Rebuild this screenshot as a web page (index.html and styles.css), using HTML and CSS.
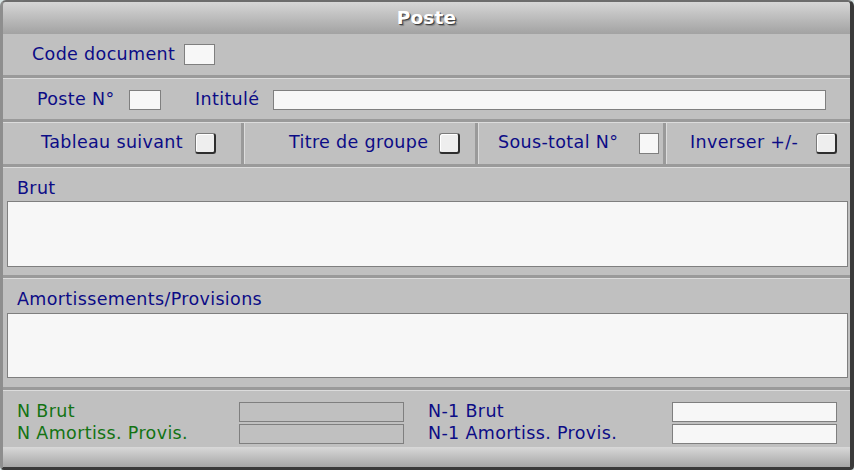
FILE: index.html
```html
<!DOCTYPE html>
<html lang="fr">
<head>
<meta charset="utf-8">
<title>Poste</title>
<link rel="stylesheet" href="styles.css">
</head>
<body>
<div class="window">
  <div class="titlebar"><span class="title">Poste</span></div>

  <div class="row row-code">
    <span class="lbl lbl-code">Code document</span>
    <span class="field f-code"></span>
  </div>
  <div class="sep"></div>

  <div class="row row-poste">
    <span class="lbl lbl-poste">Poste N°</span>
    <span class="field f-poste"></span>
    <span class="lbl lbl-intitule">Intitulé</span>
    <span class="field f-intitule"></span>
  </div>
  <div class="sep"></div>

  <div class="row row-flags">
    <div class="cell c1"><span class="lbl">Tableau suivant</span><span class="check"></span></div>
    <div class="vsep"></div>
    <div class="cell c2"><span class="lbl">Titre de groupe</span><span class="check"></span></div>
    <div class="vsep"></div>
    <div class="cell c3"><span class="lbl">Sous-total N°</span><span class="field f-sub"></span></div>
    <div class="vsep"></div>
    <div class="cell c4"><span class="lbl">Inverser +/-</span><span class="check"></span></div>
  </div>
  <div class="sep"></div>

  <div class="block block-brut">
    <div class="lbl">Brut</div>
    <div class="area area-brut"></div>
  </div>
  <div class="sep"></div>

  <div class="block block-amort">
    <div class="lbl">Amortissements/Provisions</div>
    <div class="area area-amort"></div>
  </div>
  <div class="sep"></div>

  <div class="totals">
    <span class="lbl green">N Brut</span>
    <span class="field f-total ro"></span>
    <span class="lbl">N-1 Brut</span>
    <span class="field f-total"></span>
    <span class="lbl green">N Amortiss. Provis.</span>
    <span class="field f-total ro"></span>
    <span class="lbl">N-1 Amortiss. Provis.</span>
    <span class="field f-total"></span>
  </div>

  <div class="footer"></div>
</div>
</body>
</html>
```

FILE: styles.css
```css
* { box-sizing: border-box; }

html, body {
  margin: 0;
  padding: 0;
  background: #d8e4e4;
}

.window {
  width: 854px;
  height: 470px;
  display: flex;
  flex-direction: column;
  background: #c0c0c0;
  border-top: 2px solid #6c6c6c;
  border-left: 3px solid #8e8e8e;
  border-right: 4px solid #3a3a3a;
  border-bottom: 3px solid #3a3a3a;
  border-radius: 6px 6px 4px 4px;
  overflow: hidden;
  font-family: "DejaVu Sans", Verdana, sans-serif;
  font-size: 17.5px;
  letter-spacing: 0.35px;
  color: #0c0c86;
}

.titlebar {
  height: 32px;
  flex: none;
  display: flex;
  align-items: center;
  justify-content: center;
  padding-bottom: 2px;
  background: linear-gradient(#d6d6d6, #a2a2a2);
}

.title {
  font-weight: bold;
  font-size: 18.5px;
  color: #ffffff;
  text-shadow: 1px 1px 0 #404040, 2px 2px 1px rgba(0,0,0,0.25);
  letter-spacing: 0.2px;
}

.lbl {
  white-space: nowrap;
  line-height: 20px;
}

.green { color: #137313; }

.row {
  display: flex;
  align-items: center;
  flex: none;
}

.row-code { height: 41px; padding-left: 29px; }
.lbl-code { width: 152px; margin-top: -2px; }
.f-code { width: 31px; height: 21px; }

.row-poste { height: 40px; padding-left: 34px; padding-top: 1px; }
.lbl-poste { width: 92px; margin-top: -1px; }
.f-poste { width: 32px; height: 20px; }
.lbl-intitule { width: 78px; margin-left: 34px; margin-top: -1px; }
.f-intitule { width: 553px; height: 20px; }

.field {
  display: block;
  background: #f7f7f7;
  border: 1px solid #7f7f7f;
  flex: none;
}
.field.ro { background: #c0c0c0; }

.sep {
  height: 4px;
  flex: none;
  background: #9a9a9a;
  border-bottom: 1px solid #dcdcdc;
  margin-right: -1px;
}

.row-flags { height: 41px; align-items: stretch; }

.cell {
  display: flex;
  align-items: center;
}
.cell .lbl { margin-top: -3px; }
.c1 { width: 238px; padding-left: 38px; padding-right: 25px; }
.c2 { width: 230px; padding-left: 44px; padding-right: 15px; }
.c3 { width: 184px; padding-left: 19px; padding-right: 4px; }
.c4 { width: 183px; padding-left: 23px; padding-right: 13px; }

.vsep {
  width: 4px;
  flex: none;
  background: #9a9a9a;
  border-right: 1px solid #dcdcdc;
}

.check, .f-sub { margin-left: auto; }

.check {
  width: 21px;
  height: 21px;
  flex: none;
  margin-top: -1px;
  background: #eeeeee;
  border-top: 1px solid #7a7a7a;
  border-left: 1px solid #7a7a7a;
  border-right: 2px solid #2e2e2e;
  border-bottom: 2px solid #2e2e2e;
  border-radius: 3px;
  box-shadow: inset 1px 1px 0 #ffffff;
}

.f-sub { width: 20px; height: 21px; margin-top: -1px; }

.block {
  flex: none;
  display: flex;
  flex-direction: column;
  padding-left: 4px;
  padding-right: 2px;
}
.block .lbl { padding-left: 10px; }

.block-brut { height: 107px; padding-top: 10px; }
.block-brut .area { margin-top: 3px; height: 66px; }

.block-amort { height: 108px; padding-top: 10px; }
.block-amort .area { margin-top: 4px; height: 65px; }

.area {
  background: #f7f7f7;
  border: 1px solid #7f7f7f;
}

.totals {
  flex: none;
  height: 56px;
  padding-top: 11px;
  padding-left: 14px;
  display: grid;
  grid-template-columns: 222px 189px 244px 165px;
  grid-auto-rows: 20px;
  row-gap: 2px;
  align-items: center;
}
.totals .lbl { margin-top: -2px; }
.f-total { width: 165px; height: 20px; }

.footer {
  flex: 1;
  background: linear-gradient(#d8d8d8, #a6a6a6);
}
```
